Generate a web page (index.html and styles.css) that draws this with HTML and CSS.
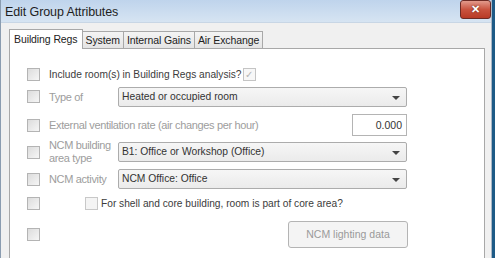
FILE: index.html
```html
<!DOCTYPE html>
<html lang="en">

<head>
    <meta charset="UTF-8">
    <title>Edit Group Attributes</title>
    <link rel="stylesheet" href="styles.css">
</head>

<body>
    <div class="window">
        <div class="titlebar">
            <span class="title">Edit Group Attributes</span>
            <button class="close-btn" type="button">&#x2715;</button>
        </div>

        <div class="content">
            <div class="tabs">
                <div class="tab active">Building Regs</div>
                <div class="tab">System</div>
                <div class="tab">Internal Gains</div>
                <div class="tab">Air Exchange</div>
            </div>

            <div class="panel">
                <div class="row row-include">
                    <span class="box"></span>
                    <span class="label dark">Include room(s) in Building Regs analysis?</span>
                    <span class="box checked">&#x2713;</span>
                </div>

                <div class="row row-type">
                    <span class="box"></span>
                    <span class="label narrow">Type of</span>
                    <div class="select">Heated or occupied room<span class="arrow"></span></div>
                </div>

                <div class="row row-vent">
                    <span class="box"></span>
                    <span class="label wide">External ventilation rate (air changes per hour)</span>
                    <div class="number">0.000</div>
                </div>

                <div class="row row-area">
                    <span class="box"></span>
                    <span class="label narrow two-line">NCM building<br>area type</span>
                    <div class="select">B1: Office or Workshop (Office)<span class="arrow"></span></div>
                </div>

                <div class="row row-activity">
                    <span class="box"></span>
                    <span class="label narrow">NCM activity</span>
                    <div class="select">NCM Office: Office<span class="arrow"></span></div>
                </div>

                <div class="row row-core">
                    <span class="box"></span>
                    <span class="box inner"></span>
                    <span class="label dark">For shell and core building, room is part of core area?</span>
                </div>

                <div class="row row-lighting">
                    <span class="box"></span>
                    <button class="lighting-btn" type="button">NCM lighting data</button>
                </div>
            </div>
        </div>
    </div>
</body>

</html>
```

FILE: styles.css
```css
body {
    margin: 0;
    padding: 0;
    width: 495px;
    height: 258px;
    overflow: hidden;
    background-color: #1d5a86;
    font-family: "Liberation Sans", Arial, sans-serif;
}

.window {
    width: 492px;
    height: 258px;
    background-color: #f0f0f0;
    border-left: 1px solid #8a9cb0;
    border-right: 1px solid #a9b6c4;
    box-sizing: border-box;
    overflow: hidden;
}

.titlebar {
    height: 23px;
    display: flex;
    align-items: center;
    justify-content: space-between;
    padding: 0 0 0 4px;
    background: linear-gradient(#bfd4ec, #d6e4f2);
    border-bottom: 1px solid #c8d6e5;
    box-sizing: border-box;
}

.title {
    font-size: 12.5px;
    letter-spacing: -0.1px;
    color: #1e1e1e;
    margin-top: 1px;
}

.close-btn {
    width: 31px;
    height: 19px;
    margin-top: -3px;
    border: 1px solid #6d2b25;
    border-radius: 3px;
    background: linear-gradient(#e29a8c, #c9533f 50%, #b83a26);
    color: #fff;
    font-size: 11px;
    font-weight: bold;
    line-height: 15px;
    padding: 0;
    text-shadow: 0 0 2px #5a1a10;
}

.content {
    padding: 6px 6px 0 8px;
}

.tabs {
    display: flex;
    align-items: flex-end;
    height: 19px;
    padding-left: 1px;
}

.tab {
    height: 17px;
    padding: 0 3px;
    border: 1px solid #a8a8a8;
    border-bottom: none;
    margin-left: -1px;
    background: linear-gradient(#f4f4f4, #e4e4e4);
    font-size: 10.5px;
    letter-spacing: -0.1px;
    line-height: 17px;
    color: #222;
    box-sizing: border-box;
}

.tab.active {
    height: 20px;
    margin-bottom: -1px;
    padding: 0 4px;
    background: #fff;
    position: relative;
    z-index: 1;
    line-height: 18px;
}

.panel {
    height: 240px;
    background: #fff;
    border: 1px solid #a8a8a8;
    padding: 15px 0 0 17px;
    box-sizing: border-box;
}

.row {
    display: flex;
    align-items: center;
}

.box {
    width: 13px;
    height: 13px;
    flex: none;
    border: 1px solid #b4b4b4;
    background: linear-gradient(135deg, #dcdcdc, #f6f6f6);
    box-sizing: border-box;
    margin-right: 9px;
}

.box.checked {
    margin: 0 0 0 1px;
    background: #f7f7f7;
    border-color: #c4c4c4;
    color: #b4b4b4;
    font-size: 10px;
    line-height: 11px;
    text-align: center;
}

.box.inner {
    margin: 0 3px 0 36px;
    background: #f4f4f4;
    border-color: #c8c8c8;
}

.label {
    font-size: 11px;
    letter-spacing: -0.35px;
    color: #9d9d9d;
}

.label.dark {
    font-size: 10.2px;
    letter-spacing: 0;
    color: #3c3c3c;
}

.label.narrow {
    width: 69px;
    flex: none;
}

.label.two-line {
    line-height: 13px;
}

.label.wide {
    width: 303px;
}

.select {
    position: relative;
    width: 289px;
    height: 20px;
    border: 1px solid #acacac;
    border-radius: 2px;
    background: linear-gradient(#f6f6f6, #ebebeb);
    padding-left: 3px;
    font-size: 10.3px;
    line-height: 18px;
    color: #333;
    box-sizing: border-box;
}

.arrow {
    position: absolute;
    right: 6px;
    top: 8px;
    border-left: 4px solid transparent;
    border-right: 4px solid transparent;
    border-top: 4px solid #444;
}

.number {
    width: 55px;
    height: 22px;
    border: 1px solid #b4b4b4;
    padding-right: 4px;
    text-align: right;
    font-size: 10.5px;
    line-height: 20px;
    color: #333;
    box-sizing: border-box;
}

.row-include {
    height: 20px;
}

.row-type {
    height: 25px;
}

.row-vent {
    height: 32px;
}

.row-area {
    height: 22px;
}

.row-activity {
    height: 32px;
}

.row-core {
    height: 16px;
}

.row-lighting {
    height: 46px;
}

.lighting-btn {
    width: 120px;
    height: 27px;
    margin-left: 239px;
    border: 1px solid #b4b4b4;
    border-radius: 3px;
    background: #f4f4f4;
    font-family: "Liberation Sans", Arial, sans-serif;
    font-size: 10.5px;
    color: #9a9a9a;
}
```
